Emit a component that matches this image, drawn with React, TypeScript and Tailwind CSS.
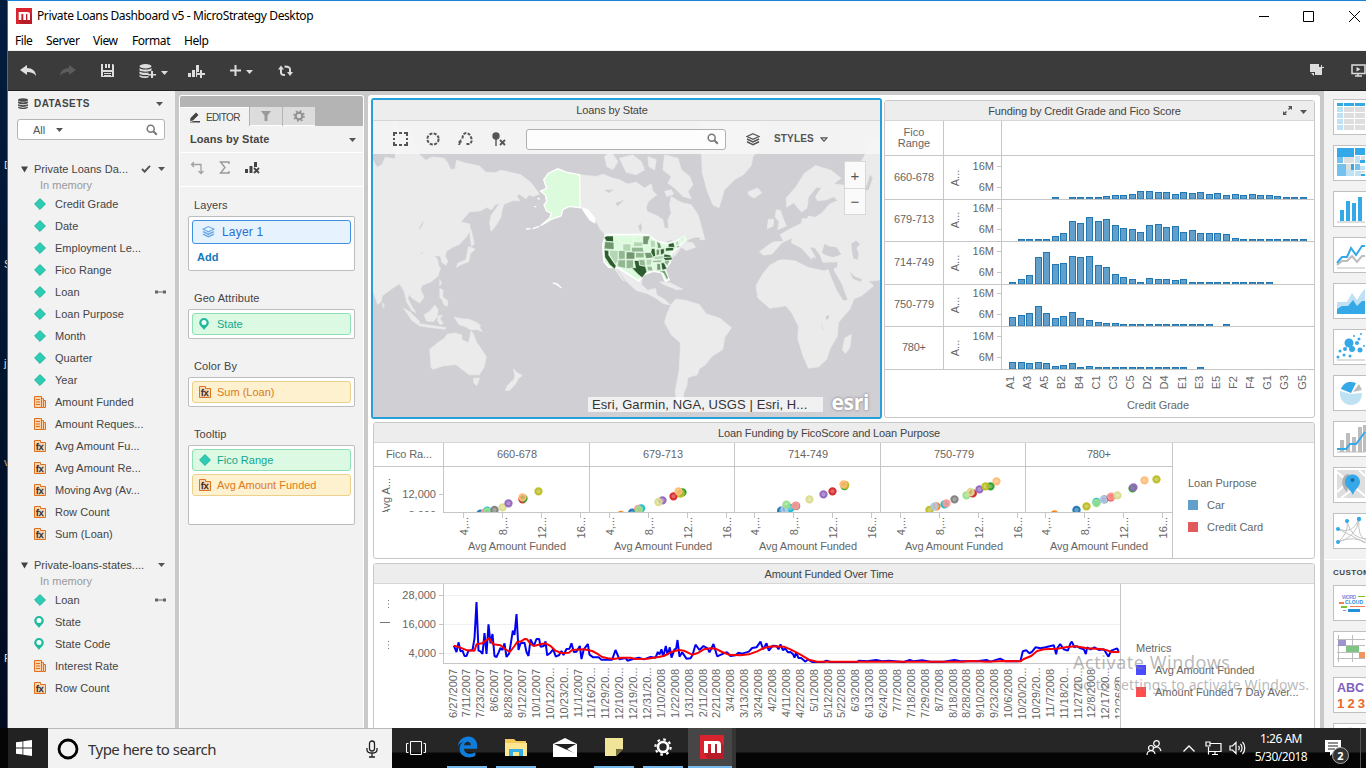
import React from "react";

const ARIAL = "'Liberation Sans', Arial, sans-serif";

function Caret({ className = "", color = "#555" }: { className?: string; color?: string }) {
  return (
    <svg className={"shrink-0 " + className} width="7" height="4" viewBox="0 0 7 4">
      <path d="M0 0h7L3.500 4z" fill={color} />
    </svg>
  );
}

function DbIcon() {
  return (
    <svg width="10" height="11" viewBox="0 0 10 11" fill="#4a4a4a" className="shrink-0">
      <ellipse cx="5" cy="2" rx="5" ry="1.800" />
      <path d="M0 3.300c1.500 1.500 8.500 1.500 10 0v1.700c-1.500 1.700-8.500 1.700-10 0zM0 6c1.500 1.500 8.500 1.500 10 0v1.600c-1.500 1.700-8.500 1.700-10 0zM0 8.600c1.500 1.500 8.500 1.500 10 0v.9c-1.500 2-8.500 2-10 0z" />
    </svg>
  );
}

function Mag({ color = "#777" }: { color?: string }) {
  return (
    <svg width="12" height="12" viewBox="0 0 12 12" fill="none" stroke={color} className="shrink-0">
      <circle cx="4.700" cy="4.700" r="3.500" strokeWidth="1.500" />
      <path d="M7.500 7.500l3.300 3.300" strokeWidth="2" />
    </svg>
  );
}

function FieldIcon({ kind }: { kind: string }) {
  if (kind === "attr")
    return (
      <svg width="12" height="12" viewBox="0 0 12 12" className="shrink-0">
        <path d="M6 .6L11.400 6 6 11.400.6 6z" fill="#2ccdb4" stroke="#1fb39c" />
      </svg>
    );
  if (kind === "geo")
    return (
      <svg width="12" height="12" viewBox="0 0 12 12" className="shrink-0">
        <path d="M5 0a4.800 4.800 0 0 1 4.800 4.800C9.800 7.800 6.500 9.500 5 12 3.500 9.500.2 7.800.2 4.800A4.800 4.800 0 0 1 5 0z" fill="#1fb99f" />
        <circle cx="5" cy="4.600" r="2.500" fill="#f4fffc" />
      </svg>
    );
  if (kind === "metric")
    return (
      <svg width="12" height="13" viewBox="0 0 12 13" className="shrink-0" fill="#fbd3ae" stroke="#e0701d">
        <path d="M.5.500h7v11h-7zM7.500 2.500h2v9h-2zM9.500 4.500h2v7h-2z" />
        <path d="M2 3.500h4M2 6h4M2 8.500h4" />
      </svg>
    );
  return (
    <svg width="12" height="13" viewBox="0 0 12 13" className="shrink-0">
      <path d="M.5.500h6v2h5v9h-11z" fill="#fbd9b5" stroke="#e0701d" />
      <text x="2" y="9.500" fontSize="9" fontFamily={ARIAL} fill="#222" stroke="#222" strokeWidth=".3" textLength="7.500" lengthAdjust="spacingAndGlyphs">fx</text>
    </svg>
  );
}

const fieldsA: [string, string][] = [
  ["attr", "Credit Grade"], ["attr", "Date"], ["attr", "Employment Le..."], ["attr", "Fico Range"], ["attr", "Loan"],
  ["attr", "Loan Purpose"], ["attr", "Month"], ["attr", "Quarter"], ["attr", "Year"], ["metric", "Amount Funded"],
  ["metric", "Amount Reques..."], ["fx", "Avg Amount Fu..."], ["fx", "Avg Amount Re..."], ["fx", "Moving Avg (Av..."],
  ["fx", "Row Count"], ["fx", "Sum (Loan)"],
];
const fieldsB: [string, string][] = [
  ["attr", "Loan"], ["geo", "State"], ["geo", "State Code"], ["metric", "Interest Rate"], ["fx", "Row Count"],
];

function Fields({ rows }: { rows: [string, string][] }) {
  return (
    <ul>
      {rows.map(([k, t]) => (
        <li key={t} className="flex h-[22px] items-center pl-[26px] pr-[9px]">
          <FieldIcon kind={k} />
          <span className="ml-[9px] flex-1 whitespace-nowrap tracking-[0.030px] text-[#444]">{t}</span>
          {t === "Loan" && (
            <svg width="11" height="4" viewBox="0 0 11 4" fill="#666"><path d="M0 .5h3v3H0zM8 .5h3v3H8zM3 1.500h5v1H3z" /></svg>
          )}
        </li>
      ))}
    </ul>
  );
}

function DatasetHead({ name, check }: { name: string; check?: boolean }) {
  return (
    <div>
      <div className="flex h-[18px] items-center pl-[13px] pr-[10px]">
        <svg width="7" height="7" viewBox="0 0 7 7"><path d="M0 .5h7L3.500 6.500z" fill="#444" /></svg>
        <span className="ml-[6px] flex-1 whitespace-nowrap tracking-[0.030px] text-[#444]">{name}</span>
        {check && (
          <svg width="10" height="8" viewBox="0 0 11 9" className="mr-[7px]" fill="none" stroke="#555" strokeWidth="2.200"><path d="M1 4.500l3 3L10 1" /></svg>
        )}
        <Caret />
      </div>
      <div className="h-[15px] pl-[32px] leading-[15px] text-[#999]">In memory</div>
    </div>
  );
}

function Datasets() {
  return (
    <aside className="flex h-full w-[167px] shrink-0 flex-col bg-[#f2f2f2]">
      <div className="flex h-[25px] items-center pl-[10px] pr-[12px]">
        <DbIcon />
        <span className="ml-[6px] flex-1 text-[10px] font-bold tracking-[0.420px] text-[#444]">DATASETS</span>
        <Caret />
      </div>
      <div className="ml-[9px] mt-[3px] flex h-[21px] w-[148px] items-center rounded-[3px] border border-[#b4b4b4] bg-white pl-[15px] pr-[6px]">
        <span className="text-[#555]">All</span>
        <Caret className="ml-[11px]" />
        <span className="flex-1" />
        <Mag />
      </div>
      <div className="mt-[20px]"><DatasetHead name="Private Loans Da..." check /></div>
      <div className="mt-0"><Fields rows={fieldsA} /></div>
      <div className="mt-[11px]"><DatasetHead name="Private-loans-states...." /></div>
      <div><Fields rows={fieldsB} /></div>
    </aside>
  );
}

function Pill({ kind, text }: { kind: string; text: string }) {
  const green = kind === "attr" || kind === "geo";
  return (
    <div className={"flex h-[22px] items-center rounded-[3px] border pl-[6px] " + (green ? "border-[#8fe0b4] bg-[#dcf9e4] text-[#10a88c]" : "border-[#ecd18c] bg-[#fdf1cf] text-[#dd7a1c]")}>
      <FieldIcon kind={kind} />
      <span className="ml-[6px]">{text}</span>
    </div>
  );
}

function DropZone({ label, h, mt, children }: { label: string; h: number; mt: number; children: React.ReactNode }) {
  return (
    <section style={{ marginTop: mt }}>
      <div className="h-[19px] pl-[6px] leading-[16px] tracking-[0.100px] text-[#444]">{label}</div>
      <div className="flex w-[167px] flex-col gap-[3px] rounded-[2px] border border-[#bdbdbd] bg-white p-[3px]" style={{ height: h }}>{children}</div>
    </section>
  );
}

function LayersIcon({ color, size = 14 }: { color: string; size?: number }) {
  return (
    <svg width={size} height={size - 1} viewBox="0 0 14 13" fill="none" stroke={color} className="shrink-0">
      <path d="M7 .7L13 3.500 7 6.300 1 3.500z" strokeWidth="1.100" />
      <path d="M1 6l6 2.900L13 6M1 8.700l6 2.900 6-2.900" strokeWidth="1.500" />
    </svg>
  );
}

function Editor() {
  return (
    <aside className="mt-[4px] flex h-full w-[185px] shrink-0 flex-col rounded-t-[3px] border border-b-0 border-white bg-[#f2f2f2]">
      <div className="flex h-[30px] items-end rounded-t-[2px] bg-[#b4b4b4]">
        <div className="flex h-[19px] w-[69px] items-center border-t border-white bg-[#f2f2f2] pl-[9px] text-[10px] text-[#444]">
          <svg width="11" height="11" viewBox="0 0 11 11" fill="#444"><path d="M1 9l.5-3L7 .5 9.500 3 4 8.500zM5 9h6v1.500H1V10z" /></svg>
          <span className="ml-[6px] pt-[2px] tracking-[-0.650px]">EDITOR</span>
        </div>
        <div className="ml-[1px] flex h-[19px] w-[32px] items-center justify-center border-b border-white bg-[#dcdcdc]">
          <svg width="10" height="10" viewBox="0 0 10 10" fill="#999"><path d="M0 0h10L6.500 4.500V10h-3V4.500z" /></svg>
        </div>
        <div className="ml-[1px] flex h-[19px] w-[32px] items-center justify-center border-b border-white bg-[#dcdcdc]">
          <svg width="12" height="12" viewBox="0 0 12 12" fill="none" stroke="#909090"><circle cx="6" cy="6" r="3.300" strokeWidth="2" /><circle cx="6" cy="6" r="5" strokeWidth="1.600" strokeDasharray="1.900 2.030" /></svg>
        </div>
      </div>
      <div className="flex h-[27px] items-center border-b border-white pb-px pl-[10px] pr-[7px]">
        <span className="flex-1 font-bold tracking-[0.080px] text-[#444]">Loans by State</span>
        <Caret className="mt-[3px]" />
      </div>
      <div className="flex h-[34px] items-center border-b border-white pb-[4px] pl-[10px]">
        <svg width="14" height="14" viewBox="0 0 14 14" fill="none" stroke="#a0a0a0" strokeWidth="1.300"><path d="M4 1L1.500 3.500 4 6M2 3.500h9v9M8.500 10l2.500 2.500 2.500-2.500" /></svg>
        <svg className="ml-[15px]" width="11" height="13" viewBox="0 0 11 13" fill="none" stroke="#999" strokeWidth="1.400"><path d="M10 3V1H1.500l4.500 5.500L1.500 12H10v-2" /></svg>
        <svg className="ml-[15px]" width="15" height="13" viewBox="0 0 15 13"><path d="M0 8h3v4H0zM4.500 5h3v7h-3zM9 1h3v5H9z" fill="#444" /><path d="M9 7l5 5M14 7l-5 5" stroke="#444" strokeWidth="1.800" /></svg>
      </div>
      <div className="pl-[8px]">
        <DropZone label="Layers" h={55} mt={10}>
          <div className="flex h-[24px] shrink-0 items-center rounded-[3px] border border-[#3f8fe4] bg-[#e6f2fe] pl-[9px]">
            <LayersIcon color="#6aa6e8" size={13} />
            <span className="ml-[7px] text-[12px] tracking-[0.200px] text-[#2a6fd2]">Layer 1</span>
          </div>
          <span className="pl-[5px] pt-[3px] font-bold text-[#1478b8]">Add</span>
        </DropZone>
        <DropZone label="Geo Attribute" h={30} mt={19}><Pill kind="geo" text="State" /></DropZone>
        <DropZone label="Color By" h={30} mt={19}><Pill kind="fx" text="Sum (Loan)" /></DropZone>
        <DropZone label="Tooltip" h={80} mt={19}>
          <Pill kind="attr" text="Fico Range" />
          <Pill kind="fx" text="Avg Amount Funded" />
        </DropZone>
      </div>
    </aside>
  );
}

const land = [
  "M12 81H75L95 110 120 95 150 178 170 196 190 186 225 190 236 205 245 225 258 222 262 196 290 205 330 213 350 232 378 234 395 226 425 233 455 240 470 252 484 262 497 280 510 298 492 305 480 300 470 312 450 298 442 305 452 318 430 318 405 328 398 345 395 368 380 392 366 410 361 385 366 362 378 345 392 325 378 330 366 345 352 338 335 348 300 352 275 382 302 388 300 410 293 425 270 450 250 458 232 470 228 485 236 500 230 512 218 503 214 485 195 482 205 495 208 512 214 522 206 545 185 563 160 572 154 585 165 608 152 626 130 612 120 600 116 612 128 636 140 655 128 648 113 622 105 590 92 568 72 580 40 604 36 622 26 630 12 590Z",
  "M300 392l7 18 8 38-8 8-4-30zM298 456l20 8-14 12-6 26-22 8-14 8 4-12 24-10zM212 556l5 10-5 8zM212 582l10 6-2 18 16 14-2 16-10-6-4-12-8-10zM104 642l20 12 28 28-4 10-20-14zM150 688l40 6 40 6-2 5-50-6-28-5zM165 662l18-12 14-18 10 14-4 22-10 14-20-2zM206 665l14-2-8 10 10 14-8 4-8-10zM255 668l14 4 14 2 14 0 24 10 14 10-4 4 8 14-14-6-22 0-12-8-22-8zM40 625l6 8-3 8z",
  "M182 765l4 55 6 5 30-10 38-4 22 17 18 14 30 0 14-22 7-32-15-24-14-20-8-22-8-12-8 36-20-10 0-14-22-6-22 4-8 12-18 12zM313 852l18 0-8 22-8-6zM433 824l10 12 16 8-12 10-8 14-8-6 6-16zM428 860l12 8-18 20-14 2 6-14z",
  "M632 240L680 245 700 238 725 248 750 255 775 268 800 262 825 280 845 268 850 290 862 300 838 318 830 335 832 350 860 362 880 375 884 400 897 402 895 375 905 355 900 330 905 305 925 318 940 325 965 330 985 360 995 395 1003 428 975 428 945 440 970 445 978 458 950 468 935 458 920 480 905 490 890 522 878 535 890 555 884 558 876 530 850 528 832 530 818 550 816 570 835 588 858 582 862 602 885 615 903 632 882 628 860 612 835 598 800 588 770 560 735 510 742 525 765 560 760 558 735 522 722 505 706 480 704 445 706 420 690 400 678 375 655 345 632 338Z",
  "M905 630l14-16 30 4 40 12 20 28 42 14 34 28-20 30-6 36-32 20-20 26-18 12-6 18-28 8-4 26-10 26 6 40-24 0-6-50 12-66 4-80-28-24-20-38 8-28z",
  "M870 562l30 2 26 14 14 6-20 2-12-6-22-8zM750 190L790 180 815 200 825 225 800 240 770 232ZM885 180L925 190 935 225 960 245 970 270 955 290 965 312 940 305 915 280 895 265 905 245 880 225ZM845 120L890 100 930 130 900 170 860 165ZM835 185L860 195 855 225 838 215ZM885 290L905 285 912 298 892 305ZM705 185L725 170 745 200 730 225 712 215ZM760 120L800 110 830 140 800 165 770 150ZM990 436L1000 420 1006 434Z",
  "M994 81h180l-10 90-14 12-6 30-22 26-28 16-30 30-16 54-18-8-18-44-14-54-2-50-10-30zM1134 292l30-12 12 14-22 16-16-8z",
  "M1195 452l16-10 30-2-10-20 28-16 36-18 2-14 18-8 22 4 20-14 22-26 24-10-10-12-26 10-24 2-6-12 18-28-16 0-24 30-2 32-18 12-24-28-20 14-2-28 28-32 26-42 34-24 46 14 30 24-22 18 40 4 20-14 10-40 20-30 20-44 40-20 30-20V562l-38-6-38 4 16 14-36 30-40 16-18-50-22-38-8-30-40 2-14-18-14 12-34-34-20-20 2-14-30 14-30 34-26 4-12-10z",
  "M1220 345l12 2 10 30 8 16-26 12 4-24-12-14zM1196 374l16 0-2 20-18 8z",
  "M1200 512l34-18 54 0 8 14 36 12 40-4 10 30 18 42 20 32 32-6-12 30-34 40-4 42-22 38-10 32-24 22-30 4-16-36-16-52 2-38-20-40-18-22-48 8-36-32-5-36 20-36zM1424 732l20-12-4 40-14 18-8-12z",
];
const seas = [
  "M1270 448l24 12 28 32 12 16 4-20-18-30 14 2 16 22 10 26 20-2 22-4 0 16-40 10-46-10-40-20-36-4-26 4 20-24 16-14z",
  "M1356 474l8-26 16 8 20 2 14 22-24 8-22-6zM1444 448l14-10 12 10-10 12 6 18-2 18-14-4-4-24zM1322 300l14 10-6 30-20 32-12-2 14-30z",
  "M165 470l-8 8-4 0zM150 400l14-24-4 14-10 16zM1440 532l14 14 22 8-4 8-24-10zM1368 665l10-2-2 10-8 4zM1354 685l6 20-2 2zM1460 290l30-18 10-32 8 10-12 34-30 14zM12 81h60l6 110-30-5-10 24-14 6-12-22z",
  "M705 285l28 0-16 10zM738 325l26-10-20 20zM806 395l8-10 4 14-6 14zM890 440l20-4-12 10z",
];
const G = ["#dcfadc", "#b3d7b3", "#92b892", "#6f986f", "#2d5c2f"];
const states: [string, number][] = [
  ["M712 424l20 0 0 18-22-2-6-12z", 4], ["M706 441l28 2 0 22-30-2z", 3], ["M704 466l14 2 0 14 22 32-4 10-16-14-14-22z", 4],
  ["M720 467l26 0 0 34-8 8-18-28z", 1], ["M733 424l12 0 14 20 0 22-24 0z", 0], ["M741 424l50 0 0 22-32 2z", 0],
  ["M760 448l24 0 0 22-24 0z", 1], ["M747 468l20 0 0 26-20 0z", 2], ["M770 472l26 0 0 22-26 0z", 3],
  ["M746 496l22 0 0 26-24-6z", 2], ["M770 496l22 0 0 26-22 0z", 2], ["M792 424l26 0 0 16-26 0z", 0], ["M792 442l28 0 0 14-28 0z", 1],
  ["M786 458l34 0 4 14-38 0z", 2], ["M798 474l26 0 0 16-26 0z", 2], ["M794 494l32 2 2 20-18-4-2-16z", 2],
  ["M794 498l14 0 2 14 18 4 4 16-14 18-12-10-12-12-8-8 12 0z", 4], ["M820 424l22 0-6 18 0 8-16 0z", 3], ["M822 452l20 0 4 10-4 8-18 0z", 0],
  ["M825 474l20 0 6 16-22 2z", 3], ["M830 494l18 0-4 18-14 0z", 1], ["M832 515l14 0 6 14-18 0z", 2], ["M842 436l14 2 2 18-14 4z", 1],
  ["M846 462l10 0 2 24-6 2-8-14z", 4], ["M862 440l10 6 4 14-12 2z", 3], ["M860 464l10 0 0 16-10 4z", 3], ["M872 464l12-2 0 14-10 6z", 4],
  ["M854 486l30-4-6 12-24 2z", 1], ["M850 498l30-2-8 8-24 0z", 2], ["M850 507l10 0 0 20-10 0z", 0], ["M862 507l10 0 2 20-12 0z", 3],
  ["M874 505l10 0 8 18-14 4z", 4], ["M886 498l16-2-8 18-10-10z", 2], ["M880 490l26-4 2 10-20 2z", 4], ["M884 478l20 4 0 6-22 0z", 4],
  ["M888 460l24-2 0 10-24 2z", 4], ["M896 448l16-4 4 14-20 0z", 4], ["M918 442l8-4 2 14-8 0z", 1], ["M920 454l12 0-8 6z", 3], ["M930 430l14-6 2 14-12 8z", 0],
  ["M868 530l18-2 10 22-4 6-10-20z", 3],
];

function MapSvg() {
  return (
    <svg className="block h-full w-full" viewBox="12 78 1518 891" preserveAspectRatio="none">
      <rect x="0" y="70" width="1540" height="910" fill="#d0cfd4" />
      {land.map((d, i) => <path key={i} d={d} fill="#ebebeb" stroke="#ebebeb" strokeWidth="2" strokeLinejoin="round" />)}
      {seas.map((d, i) => <path key={i} d={d} fill="#d0cfd4" />)}
      <path d="M523 255l14-20 28-13 26 10 40 8 1 99-32-4-20 10-4 18-28 10-34 20 28-24 4-14-14-6-8-18 8-12-4-18-14-12 18-8z" fill="#dcfadc" stroke="#fff" strokeWidth="4" />
      <path d="M638 340l18 6 20 26 0 12-14-8-14-20zM470 403l14-1M490 402l20-7M495 336h6M505 310l6 4M550 565l14 4 12 12" fill="#fff" stroke="#fff" strokeWidth="4" />
      <path d="M708 420l124 0 30 20 30 8 24-6 28-16 4 10-22 22-22 20-2 26-16 20 12 32-10 4-12-26-26-4-32 12-10 18-24-16-38-24-28-2-14-16-4-50z" fill="#dcfadc" stroke="#fff" strokeWidth="5" />
      {states.map(([d, c], i) => <path key={i} d={d} fill={G[c]} stroke="#eefcee" strokeWidth="2" />)}
    </svg>
  );
}

function PanelHead({ title, tools, dx = 0, tall }: { title: string; tools?: boolean; dx?: number; tall?: boolean }) {
  return (
    <div className={"relative flex shrink-0 items-center justify-center border-b border-[#d6d6d6] bg-[#ededed] tracking-[-0.130px] text-[#444] " + (tall ? "h-[21px]" : "h-[20px]")}>
      <span style={{ marginRight: dx }}>{title}</span>
      {tools && (
        <div className="absolute right-[7px] top-[5px] flex items-center gap-[8px]">
          <svg width="9" height="9" viewBox="0 0 9 9" fill="#555"><path d="M5 0h4v4L7.500 2.500 6 4 5 3l1.500-1.500zM0 5l1.500 1.500L3 5l1 1-1.500 1.500L4 9H0z" /></svg>
          <Caret className="mt-[3px]" />
        </div>
      )}
    </div>
  );
}

function MapPanel() {
  return (
    <div className="flex h-[321px] w-[511px] shrink-0 flex-col rounded-[3px] border-2 border-[#26a0da] bg-white">
      <PanelHead title="Loans by State" dx={29} tall />
      <div className="relative min-h-0 flex-1 overflow-hidden">
        <MapSvg />
        <div className="absolute inset-x-0 top-0 flex h-[33px] items-center bg-[#f6f6f6]/90 pl-[20px] pt-[3px] text-[#555]">
          <svg width="15" height="14" viewBox="0 0 15 14" fill="none" stroke="#555" strokeWidth="2"><path d="M1 4V1h3M6 1h3M11 1h3v3M14 6v2M14 10v3h-3M9 13H6M4 13H1v-3M1 8V6" /></svg>
          <svg className="ml-[18px]" width="14" height="14" viewBox="0 0 14 14" fill="none" stroke="#555" strokeWidth="2"><circle cx="7" cy="7" r="5.600" strokeDasharray="3 1.400" /></svg>
          <svg className="ml-[18px]" width="15" height="14" viewBox="0 0 15 14" fill="none" stroke="#555" strokeWidth="2"><path d="M4.500 6.500c0-7 6-6.500 8-2.500 1.500 3 2 6-1 8H7.500" strokeDasharray="3 1.300" /><path d="M0 10l3-3 1 4-1-1-1 3H0l1-2z" fill="#555" stroke="none" /></svg>
          <svg className="ml-[19px]" width="14" height="15" viewBox="0 0 14 15"><circle cx="4" cy="4" r="3.700" fill="#555" /><path d="M3.300 7h1.400v7H3.300z" fill="#555" /><path d="M8 8l5 5M13 8l-5 5" stroke="#555" strokeWidth="1.800" /></svg>
          <div className="ml-[20px] flex h-[21px] w-[200px] items-center justify-end rounded-[3px] border border-[#b0b0b0] bg-white/80 pr-[6px]"><Mag /></div>
          <span className="ml-[20px] flex"><LayersIcon color="#555" /></span>
          <span className="ml-[14px] text-[10px] font-bold tracking-[0.150px]">STYLES</span>
          <svg className="ml-[6px]" width="8" height="5" viewBox="0 0 8 5" fill="none" stroke="#555" strokeWidth="1.200"><path d="M1 .8h6L4 4.200z" /></svg>
        </div>
        <div className="absolute right-[14px] top-[40px] flex w-[22px] flex-col border border-[#d8d8d8] bg-[#fafafa] text-center text-[15px] text-[#555]">
          <span className="h-[27px] border-b border-[#d8d8d8] leading-[27px]">+</span>
          <span className="h-[25px] leading-[25px]">−</span>
        </div>
        <div className="absolute bottom-[5px] right-[57px] h-[15px] w-[235px] whitespace-nowrap bg-white/70 pl-[4px] text-[13px] leading-[15px] tracking-[0.090px] text-[#333]">Esri, Garmin, NGA, USGS | Esri, H...</div>
        <div className="absolute bottom-[2px] right-[11px] font-['Open_Sans'] text-[21px] font-bold leading-[26px] tracking-[-0.300px] text-white [text-shadow:0_0_3px_#777]">esri</div>
      </div>
    </div>
  );
}

const bars: number[][] = [
  [0,0,0,0,0,2,0,2,2,2,2,3,4,4,5,8,8,7,7,5,7,6,7,5,6,4,5,4,5,4,4,3,2,2,2],
  [0,2,2,2,2,5,8,20,18,24,20,22,16,13,12,9,16,17,14,15,9,11,8,8,8,7,3,2,2,2,2,2,2,2,2],
  [2,5,9,27,32,20,21,28,27,28,19,17,10,7,5,2,6,5,5,4,5,2,2,2,2,2,2,2,2,2,2,0,0,0,0],
  [9,11,13,20,13,8,10,14,8,6,4,3,3,2,2,2,2,2,2,2,2,2,2,2,0,2,0,0,0,0,0,0,0,0,0],
  [7,7,6,7,6,3,4,6,2,3,2,2,2,2,2,2,2,2,2,2,2,0,2,0,0,0,0,0,0,0,0,0,0,0,0],
];
const base = [199, 241, 284, 326, 369];
const fico = ["660-678", "679-713", "714-749", "750-779", "780+"];
const grades = ["A1","A3","A5","B2","B4","C1","C3","C5","D2","D4","E1","E3","E5","F2","F4","G1","G3","G5"];

function VText({ x, y, anchor = "middle", children, len }: { x: number; y: number; anchor?: "middle" | "start" | "end"; children: string; len?: number }) {
  return <text transform={`translate(${x} ${y}) rotate(-90)`} textAnchor={anchor} textLength={len}>{children}</text>;
}

function BarPanel() {
  return (
    <div className="flex h-[318px] w-[431px] shrink-0 flex-col overflow-hidden rounded-[3px] border border-[#c8c8c8] bg-white">
      <PanelHead title="Funding by Credit Grade and Fico Score" tools dx={30} />
      <svg className="block" width="429" height="296" viewBox="885 121 429 296" fontFamily={ARIAL} fontSize="11" fill="#666">
        <g stroke="#c6c6c6" fill="none" shapeRendering="crispEdges">
          <path d="M885 155.500h429M885 199.500h429M885 241.500h429M885 284.500h429M885 326.500h429M885 369.500h429M943.500 121v249M1001.500 121v249" />
          {base.map((b) => <path key={b} d={`M997 ${b - 32.500}h4M997 ${b - 11.500}h4`} />)}
        </g>
        <text x="914" y="136" textAnchor="middle">Fico</text>
        <text x="914" y="147" textAnchor="middle">Range</text>
        {base.map((b, r) => (
          <g key={b}>
            <text x="914" y={b - 18} textAnchor="middle" textLength={r < 4 ? 40 : 24}>{fico[r]}</text>
            <text x="994" y={b - 29} textAnchor="end">16M</text>
            <text x="994" y={b - 8} textAnchor="end">6M</text>
            <VText x={959} y={b - 21}>A...</VText>
            {bars[r].map((h, i) => h > 0 && (
              <rect key={i} x={Math.round(1009 + i * 8.560) + 0.500} y={b - h + 0.500} width="6" height={h - 0.500} fill="#629fca" stroke="#1f77b4" />
            ))}
            <path d={`M1002 ${b + 0.500}h312`} stroke="#c6c6c6" shapeRendering="crispEdges" />
          </g>
        ))}
        {grades.map((g, i) => <VText key={g} x={1014 + i * 17.150} y={382.500}>{g}</VText>)}
        <text x="1158" y="409" textAnchor="middle" textLength="62">Credit Grade</text>
      </svg>
    </div>
  );
}

const C: Record<string, string> = { b: "#1f77b4", p: "#ff9896", g: "#98df8a", k: "#7f7f7f", y: "#dbdb8d", v: "#9467bd", r: "#d62728", e: "#2ca02c", a: "#ffbb78", o: "#bcbd22", c: "#17becf", n: "#ff7f0e", l: "#aec7e8" };
const dots: [number, number, string][] = [
  [330,280,"b"],[343,277,"p"],[350,271,"c"],[350,274,"g"],[372,269,"k"],[396,261,"y"],[414,249,"v"],[456,237,"r"],[459,234,"e"],[456,231,"a"],[504,213,"o"],
  [751,284,"n"],[785,277,"b"],[812,264,"c"],[803,266,"p"],[805,269,"g"],[876,240,"v"],[864,245,"y"],[909,228,"r"],[936,216,"e"],[930,220,"o"],[924,213,"a"],
  [1232,271,"b"],[1260,263,"c"],[1242,267,"l"],[1248,253,"g"],[1277,257,"k"],[1275,256,"p"],[1317,237,"y"],[1359,222,"v"],[1386,213,"r"],[1422,197,"e"],[1424,194,"o"],[1419,192,"a"],
  [1677,269,"o"],[1698,258,"n"],[1692,258,"l"],[1722,252,"c"],[1728,249,"p"],[1752,237,"k"],[1788,225,"g"],[1807,219,"r"],[1800,215,"y"],[1827,207,"v"],[1860,198,"e"],[1845,198,"o"],[1878,183,"a"],
  [2052,282,"n"],[2118,269,"b"],[2148,258,"o"],[2178,245,"c"],[2178,248,"g"],[2202,237,"k"],[2200,237,"l"],[2221,231,"r"],[2222,229,"p"],[2241,225,"y"],[2286,204,"e"],[2289,201,"v"],[2322,180,"a"],[2358,177,"o"],
];

function ScatterPanel() {
  const cols = [443, 589, 734, 880, 1025];
  return (
    <div className="flex h-[137px] w-[942px] flex-col overflow-hidden rounded-[3px] border border-[#c8c8c8] bg-white">
      <PanelHead title="Loan Funding by FicoScore and Loan Purpose" dx={30} />
      <div className="flex flex-1">
        <svg className="block" width="799" height="115" viewBox="374 443 799 115" fontFamily={ARIAL} fontSize="11" fill="#666">
          <g stroke="#c6c6c6" shapeRendering="crispEdges">
            <path d="M374 466.500h798M443 512.500h729M443.500 443v70M589.500 443v70M734.500 443v70M880.500 443v70M1025.500 443v70M1172.500 443v115M439 494.500h4" />
          </g>
          <text x="409" y="458" textAnchor="middle" textLength="46">Fico Ra...</text>
          <text x="436" y="498" textAnchor="end">12,000</text>
          <clipPath id="plot"><path d="M374 467h798v45H374z" /></clipPath>
          <g clipPath="url(#plot)">
            <text x="436" y="519" textAnchor="end">8,000</text>
            <VText x={390} y={478} anchor="end">Avg A...</VText>
            <g transform="translate(370 420) scale(.33333)">
              {dots.map(([x, y, c], i) => <circle key={i} cx={x + 1.500} cy={y + 1} r="9.500" fill={C[c]} fillOpacity=".7" stroke={C[c]} strokeWidth="6" strokeOpacity=".95" />)}
            </g>
          </g>
          {cols.map((x, i) => (
            <g key={x}>
              <text x={x + 74} y="458" textAnchor="middle" textLength={i < 4 ? 40 : 24}>{fico[i]}</text>
              {["4,...", "8,...", "12...", "16..."].map((t, j) => (
                <g key={t}>
                  <path d={`M${x + 20.500 + j * 39} 513v5`} stroke="#c6c6c6" shapeRendering="crispEdges" />
                  <VText x={x + 25 + j * 39} y={517} anchor="end">{t}</VText>
                </g>
              ))}
              <text x={x + 74} y="550" textAnchor="middle" textLength="98">Avg Amount Funded</text>
            </g>
          ))}
        </svg>
        <div className="flex flex-col pl-[15px] pt-[32px] text-[#666]">
          <span className="leading-[16px]">Loan Purpose</span>
          <span className="mt-[6px] flex items-center leading-[16px]"><i className="mr-[9px] h-[10px] w-[10px] bg-[#629fca]" />Car</span>
          <span className="mt-[6px] flex items-center leading-[16px]"><i className="mr-[9px] h-[10px] w-[10px] bg-[#e25b5c]" />Credit Card</span>
        </div>
      </div>
    </div>
  );
}

const blue = "250,257 258,276 264,247 270,274 276,272 282,288 288,288 294,272 306,270 312,235 318,126 324,272 330,274 336,282 342,219 348,282 354,193 360,250 366,222 372,288 378,291 384,278 390,264 396,270 402,250 408,291 416,280 421,250 427,212 432,225 438,162 444,270 450,250 462,248 468,276 474,288 480,238 490,258 498,237 506,237 510,260 520,258 525,244 530,286 540,278 548,268 556,290 566,285 573,273 579,285 588,267 597,266 603,250 610,276 618,275 628,258 633,297 640,268 652,252 657,284 668,292 685,292 692,299 725,299 735,270 747,298 765,294 771,302 785,298 805,293 820,298 840,291 855,293 862,276 867,283 873,268 878,290 886,258 891,285 898,262 903,293 912,268 917,266 921,240 927,290 935,277 948,296 960,295 966,285 975,254 987,270 999,258 1011,265 1017,277 1029,252 1040,289 1060,280 1070,277 1080,288 1095,286 1104,278 1115,281 1135,275 1145,264 1158,262 1170,245 1178,268 1188,250 1195,272 1207,257 1218,258 1224,268 1230,253 1237,270 1245,266 1252,277 1260,276 1268,283 1272,293 1277,278 1284,294 1292,294 1305,305 1312,298 1325,306 1360,306 1368,302 1380,306 1460,306 1465,302 1490,304 1517,300 1535,304 1555,302 1600,306 1618,300 1630,304 1655,301 1680,305 1720,305 1752,300 1770,304 1820,304 1848,300 1860,305 1889,296 1905,304 1940,304 1950,303 1957,274 1967,271 1977,280 1985,275 1995,262 2010,265 2025,262 2050,256 2057,283 2060,265 2069,252 2080,268 2092,272 2100,250 2104,245 2112,262 2118,258 2130,265 2140,268 2146,282 2150,262 2160,268 2172,262 2185,270 2200,268 2214,290 2222,272 2240,265 2246,278";
const red = "250,257 262,260 290,271 312,272 318,253 335,250 346,242 356,235 368,253 390,256 405,268 418,276 432,258 440,246 452,244 462,237 470,238 480,252 490,258 510,253 525,250 540,258 555,272 572,279 595,278 605,270 640,268 665,273 680,281 695,291 712,295 730,297 752,293 780,293 795,297 830,296 860,292 880,288 905,275 925,270 940,272 965,284 980,280 1000,268 1020,265 1035,266 1055,276 1075,284 1110,286 1135,283 1160,274 1180,264 1205,259 1240,260 1260,268 1290,284 1315,299 1340,305 1775,305 1800,303 1850,305 1900,303 1950,304 1960,297 1982,288 2000,273 2020,268 2060,266 2090,261 2115,259 2150,265 2190,267 2210,271 2222,276 2246,276";
const dates = ["6/27/2007","7/11/2007","7/23/2007","8/6/2007","8/28/2007","9/12/2007","10/1/2007","10/12/20...","10/23/20...","11/1/2007","11/16/20...","11/29/20...","12/10/20...","12/19/20...","12/31/20...","1/10/2008","1/22/2008","1/31/2008","2/11/2008","2/21/2008","3/4/2008","3/13/2008","3/24/2008","4/2/2008","4/11/2008","4/22/2008","5/1/2008","5/12/2008","5/22/2008","6/3/2008","6/13/2008","6/24/2008","7/7/2008","7/18/2008","7/29/2008","8/7/2008","8/18/2008","8/28/2008","9/10/2008","9/23/2008","10/6/2008","10/20/20...","10/29/20...","11/7/2008","11/18/20...","11/27/20...","12/8/2008","12/17/20...","12/26/20..."];

function LinePanel() {
  return (
    <div className="flex h-[180px] w-[942px] flex-col overflow-hidden rounded-[3px] border border-[#c8c8c8] bg-white">
      <PanelHead title="Amount Funded Over Time" dx={30} />
      <div className="flex flex-1">
        <svg className="block" width="747" height="159" viewBox="374 584 747 159" fontFamily={ARIAL} fontSize="11" fill="#666">
          <clipPath id="line"><path d="M374 584h745.500v159H374z" /></clipPath>
          <g shapeRendering="crispEdges" fill="none">
            <path d="M444 595.500h676M444 624.500h676M444 653.500h676" stroke="#f0f0f0" />
            <path d="M443.500 584v80M443 663.500h677M439 595.500h4M439 624.500h4M439 653.500h4M1120.500 584v159" stroke="#c6c6c6" />
          </g>
          <text x="436" y="599" textAnchor="end">28,000</text>
          <text x="436" y="628" textAnchor="end">16,000</text>
          <text x="436" y="657" textAnchor="end">4,000</text>
          <path d="M380 622.500h10" stroke="#777" />
          <path d="M388.500 600v1M388.500 603.500v1M388.500 607v1M388.500 641v1M388.500 644.500v1M388.500 648v1" stroke="#777" />
          <g clipPath="url(#line)">
            <g transform="translate(370.5 560) scale(.33333)" fill="none" strokeWidth="6" strokeLinejoin="bevel">
              <polyline points={blue} stroke="#0000f5" />
              <polyline points={red} stroke="#fb0000" />
            </g>
            {dates.map((d, i) => <VText key={d} x={456.500 + i * 13.890} y={d.endsWith("...") ? 667.500 : 669} anchor="end">{d}</VText>)}
          </g>
        </svg>
        <div className="flex flex-col pl-[15px] pt-[56px] text-[#666]">
          <span className="leading-[16px]">Metrics</span>
          <span className="mt-[6px] flex items-center leading-[16px]"><i className="mr-[9px] h-[10px] w-[10px] bg-[#4c4cff]" />Avg Amount Funded</span>
          <span className="mt-[6px] flex items-center whitespace-nowrap leading-[16px]"><i className="mr-[9px] h-[10px] w-[10px] bg-[#ff4c4c]" />Amount Funded 7 Day Aver...</span>
        </div>
      </div>
    </div>
  );
}

const B = "#35a8e8";
const L = "#bfe1f4";
const K = "#bdbdbd";
const thumbs: React.ReactNode[] = [
  <g><path d="M4 4h6v3H4zM11 4h10v3H11zM22 4h10v3H22z" fill={B} /><path d="M4 8h6v5H4zM4 14h6v5H4zM4 20h6v5H4zM4 26h6v5H4z" fill={L} /><path d="M11 8h10v5H11zM11 14h10v5H11zM11 20h10v5H11zM11 26h10v5H11zM22 8h10v5H22zM22 14h10v5H22zM22 20h10v5H22zM22 26h10v5H22z" fill="#dedede" /></g>,
  <g><path d="M4 3h17v9H4zM22 3h10v7H22zM18 19h3v6h-3zM28 29h4v2h-4zM27 15h5v3h-5z" fill={B} /><path d="M4 12h6v6H4zM4 19h9v12H4zM22 19h5v6h-5z" fill="#74c1ee" /><path d="M22 11h5v7h-5zM13 25h8v6h-8zM22 26h6v5h-6zM27 21h5v4h-5z" fill={L} /><path d="M11 12h10v6H11zM13 19h5v6h-5zM28 11h4v4h-4zM28 26h4v2h-4z" fill="#dedede" /></g>,
  <g><path d="M7 19h4v11H7zM13 10h4v20h-4zM19 12h4v18h-4zM25 6h4v24h-4z" fill={B} /><path d="M4 31h28" stroke={K} /></g>,
  <g fill="none" strokeWidth="2"><path d="M4 28l5-4h5l5-5 5 6 5-6h3" stroke={K} /><path d="M4 26l5-6h5l4-9 5 7 6-9h3" stroke={B} /><path d="M4 31h28" stroke={K} strokeWidth="1" /></g>,
  <g><path d="M4 31V19h10l5-9 5 7 5-8 3-3v25z" fill={L} /><path d="M4 31v-5l5-3h6l5-6 4 6 5-5h3v13z" fill={B} /></g>,
  <g fill={B}><circle cx="16" cy="14" r="4.500" /><circle cx="19" cy="20" r="3" /><circle cx="12" cy="20" r="2" /><circle cx="27" cy="21" r="2.500" /><circle cx="24" cy="14" r="2" /><circle cx="26" cy="10" r="1.500" /><circle cx="21" cy="7" r="1" /><circle cx="28" cy="5" r="1" /><circle cx="7" cy="22" r="1.500" /><circle cx="11" cy="26" r="1.500" /><circle cx="17" cy="27" r="1.500" /><circle cx="5" cy="28" r="1.500" /><circle cx="31" cy="17" r="1" /><path d="M4 31h28" stroke={K} /></g>,
  <g><path d="M18 19L7 16c-1 8 4 14 11 14 7 0 11-5 11-12z" fill={L} /><path d="M18 18L8 14c3-8 10-8 15-6z" fill={B} /><path d="M20 17l6-8 3 6z" fill={K} /></g>,
  <g><path d="M7 19h4v12H7zM13 12h4v19h-4zM19 16h4v15h-4zM25 6h4v25h-4zM30 4h4v27h-4z" fill={K} /><path d="M4 28h9l4-5h6l9-12" fill="none" stroke={B} strokeWidth="2" /><path d="M4 31h28" stroke={K} /></g>,
  <g><path d="M4 3h28v28H4z" fill="#dedede" /><path d="M4 5l28 24M4 25L15 15M8 31l12-9M26 3l6 6" stroke="#fff" strokeWidth="2" /><path d="M14 25C6 18 9 7 16 7z" fill="#b0b0b0" /><path d="M20 28c-2-5-8-8-8-13 0-10 15-10 15 0 0 5-6 8-7 13z" fill={B} /><circle cx="19.500" cy="13" r="2" fill="#156fa5" /></g>,
  <g><path d="M14 8Q16 20 5 29Q24 24 26 6Q24 24 34 28M5 16Q18 22 32 30M14 8Q18 26 34 26M26 6Q20 22 5 16M5 29Q20 22 34 30" fill="none" stroke="#c4c4c4" /><circle cx="14" cy="8" r="2" fill={B} /><circle cx="26" cy="6" r="2.200" fill={B} /><circle cx="5" cy="16" r="2" fill={B} /><circle cx="5" cy="29" r="2" fill={B} /></g>,
  <g fontFamily={ARIAL} fontWeight="bold" fontSize="5"><text x="9" y="14" fill="#8d8de0" textLength="14">WORD</text><text x="12" y="19" fill="#2490d8" textLength="18">CLOUD</text><path d="M25 11h7v1h-7zM8 21h6v2H8z" fill="#7cc02c" /><path d="M6 17h5v2H6zM17 21h15v1H17z" fill="#f5814f" /><path d="M15 24h12v3H15z" fill="#2490d8" /><path d="M10 25h3v1h-3z" fill="#8d8de0" /></g>,
  <g><path d="M4 8.500h28M4 14.500h28M4 21.500h28M4 27.500h28M5.500 4v27M19.500 4v27" stroke={K} /><path d="M5 9h8v6H5z" fill="#9e95cc" /><path d="M13 15h13v6H13z" fill="#7fc482" /><path d="M26 21h6v6h-6z" fill="#f0955f" /></g>,
  <g fontFamily={ARIAL} fontWeight="bold" fontSize="12.500"><text x="4" y="15" fill="#7f5fc0" textLength="27">ABC</text><text x="4" y="31" fill="#e8682a" textLength="28" fontSize="13">123</text></g>,
  <g fill="none"><circle cx="18" cy="18" r="11" stroke="#e9c9a8" strokeWidth="5" strokeDasharray="7 2" /></g>,
];

function Thumb({ children }: { children: React.ReactNode }) {
  return (
    <div className="h-[36px] w-[44px] shrink-0 border border-[#c0c0c0] bg-white">
      <svg width="34" height="34" viewBox="1 1 34 34">{children}</svg>
    </div>
  );
}

function Gallery() {
  return (
    <aside className="flex h-full w-[42px] shrink-0 flex-col overflow-hidden bg-[#f2f2f2] pt-[8px]">
      <div className="flex flex-col gap-[10px] pl-[9px]">{thumbs.slice(0, 10).map((t, i) => <Thumb key={i}>{t}</Thumb>)}</div>
      <div className="mt-[10px] h-[26px] shrink-0 border-t border-white pl-[9px] pt-[6px] text-[8px] font-bold leading-[13px] tracking-[0.450px] text-[#444]">CUSTOM</div>
      <div className="flex flex-col gap-[10px] pl-[9px]">{thumbs.slice(10).map((t, i) => <Thumb key={i}>{t}</Thumb>)}</div>
    </aside>
  );
}

function MLogo({ size }: { size: number }) {
  return (
    <svg width={size} height={size} viewBox="0 0 24 24" className="shrink-0">
      <path d="M0 0h24v24H0z" fill="#d9232e" /><path d="M4 18l16-11 4 4v13H8z" fill="#b81c26" />
      <path d="M4 6h13c3 0 4 1 4 4v8h-4V9h-2v9h-4V9H8v9H4z" fill="#fff" />
    </svg>
  );
}

function Toolbar() {
  return (
    <div className="flex h-[40px] shrink-0 items-center border-b border-[#222] bg-[#3b3b3b]">
      <svg className="ml-[12px]" width="17" height="11" viewBox="0 0 17 11"><path d="M0 5l7-5v3c5 0 9 3 9 8-2-3-5-4-9-4v3z" fill="#e0e0e0" /></svg>
      <svg className="ml-[22px]" width="17" height="11" viewBox="0 0 17 11"><path d="M17 5l-7-5v3C5 3 1 6 1 11c2-3 5-4 9-4v3z" fill="#5c5c5c" /></svg>
      <svg className="ml-[25px]" width="13" height="13" viewBox="0 0 13 13"><path d="M0 0h2v6h9V0h1l1 1v12H0zM4 0h2v4H4zM7 0h2v4H7z" fill="#ddd" /><path d="M2 8h9v4H2z" fill="#3b3b3b" /><path d="M3 9h7v1H3zM3 11h7v1H3z" fill="#ddd" /></svg>
      <svg className="ml-[25px]" width="17" height="14" viewBox="0 0 17 14" fill="#ddd"><ellipse cx="6.500" cy="2.300" rx="6" ry="2.200" /><path d="M.5 4c2 2 10 2 12 0v2.500c-2 1.500-10 1.500-12 0zM.5 7.500c2 1.500 6 1.500 9 1v2.200c-3 .5-7 .5-9-1zM.5 11c2 1.500 6 1.500 9 1v1.500c-3 1-8 .5-9-1zM12 7h2v3h3v1.500h-3v3h-2v-3H9V10h3z" /></svg>
      <Caret className="ml-[5px] mt-[4px]" color="#ddd" />
      <svg className="ml-[20px]" width="17" height="14" viewBox="0 0 17 14" fill="#ddd"><path d="M0 9h3v4H0zM4 6h3v7H4zM8 1h3v7H9v5H8zM12 6h2v3h3v2h-3v3h-2v-3H9V9h3z" /></svg>
      <svg className="ml-[25px]" width="11" height="11" viewBox="0 0 11 11" fill="#ddd"><path d="M4.500 0h2v4.500H11v2H6.500V11h-2V6.500H0v-2h4.500z" /></svg>
      <Caret className="ml-[5px] mt-[3px]" color="#ddd" />
      <svg className="ml-[25px]" width="15" height="12" viewBox="0 0 15 12" fill="none" stroke="#ddd" strokeWidth="2"><path d="M3 3.500V7.500c0 2 1 2.500 4 2.500M6.500 1.500c4 0 5.500.5 5.500 3V8" /><path d="M0 4.500L3 .5l3 4zM9 7l3 4 3-4z" fill="#ddd" stroke="none" /></svg>
      <span className="flex-1" />
      <svg width="15" height="13" viewBox="0 0 15 13" fill="#ddd"><path d="M0 0h9v4h2v2h1v5H5V8H0zM11 1h1v2h2v1h-2v2h-1V4H9V3h2zM1 9l3 3V9z" /></svg>
      <svg className="ml-[26px]" width="15" height="13" viewBox="0 0 15 13"><path d="M1 1h13v8.500H1zM4 12h7M7 10v2" fill="none" stroke="#ddd" strokeWidth="1.500" /><path d="M5.500 3l4 2.300-4 2.300z" fill="#ddd" /></svg>
    </div>
  );
}

const UI = "font-['Noto_Sans']";

function TitleBar() {
  return (
    <>
      <div className={"flex h-[31px] shrink-0 items-center border-t border-[#1883d7] pl-[8px] text-black " + UI}>
        <MLogo size={16} />
        <span className="ml-[5px] text-[12px] tracking-[-0.390px]">Private Loans Dashboard v5 - MicroStrategy Desktop</span>
        <span className="flex-1" />
        <svg width="107" height="11" viewBox="0 0 107 11" fill="none" stroke="#000"><path d="M0 5.500h10M44.500.5h10v10h-10zM90 0l11 11M90 11L101 0" /></svg>
      </div>
      <nav className={"flex h-[20px] shrink-0 items-center border-b border-[#f0f0f0] pl-[7px] text-[12px] tracking-[-0.450px] text-black " + UI}>
        <span className="w-[31px]">File</span><span className="w-[47px]">Server</span><span className="w-[39px]">View</span><span className="w-[52px]">Format</span><span>Help</span>
      </nav>
    </>
  );
}

function TaskItem({ w, children, active, line = true }: { w: number; children: React.ReactNode; active?: boolean; line?: boolean }) {
  return (
    <div className={"flex h-full shrink-0 flex-col items-center " + (active ? "border-r-4 border-[#353535] bg-[#464646]" : "")} style={{ width: w }}>
      <div className="flex flex-1 items-center">{children}</div>
      <div className={"h-[2px] w-full " + (line ? "bg-[#76b9ed]" : "")} />
    </div>
  );
}

function Taskbar() {
  return (
    <footer className={"flex h-[40px] w-full shrink-0 bg-[linear-gradient(#262626_0_24px,#050505_25px)] text-white " + UI}>
      <div className="flex h-full w-[48px] items-center justify-center bg-[linear-gradient(90deg,#050505_0_8px,#222_8px)]">
        <svg width="16" height="16" viewBox="0 0 16 16" fill="#fff"><path d="M0 2.300l6.500-.9v6.200H0zM7.300 1.300L16 0v7.600H7.300zM0 8.400h6.500v6.200L0 13.700zM7.300 8.400H16V16l-8.700-1.200z" /></svg>
      </div>
      <div className="flex h-full w-[344px] items-center border-t border-[#b8b8b8] bg-[#f2f2f2] pl-[9px] pr-[13px]">
        <svg width="22" height="22" viewBox="0 0 22 22" fill="none"><circle cx="11" cy="11" r="9" stroke="#000" strokeWidth="2.800" /></svg>
        <span className="ml-[9px] flex-1 text-[15px] tracking-[-0.530px] text-[#333]">Type here to search</span>
        <svg width="14" height="18" viewBox="0 0 14 18" fill="none" stroke="#222" strokeWidth="1.300"><rect x="4.500" y="1" width="5" height="10" rx="2.500" /><path d="M2 8v2c0 4 10 4 10 0V8M7 13v4M4 17h6" /></svg>
      </div>
      <div className="flex h-full w-[47px] items-center justify-center">
        <svg width="20" height="14" viewBox="0 0 20 14" fill="none" stroke="#fff"><path d="M4.500.5h11v13h-11zM2.500 2.500h-2v9h2M17.500 2.500h2v9h-2" /></svg>
      </div>
      <span className="w-[8px]" />
      <TaskItem w={40}>
        <svg width="21" height="22" viewBox="0 0 24 24"><path d="M1 11C2 4 7 0 13 0c6 0 10 5 10 10v4H8c0 6 8 7 13 4v4c-6 4-18 2-18-8 0-4 2-7 5-8-4 1-6 3-7 5zm7-1h8c0-5-7-6-8 0z" fill="#0f7ddb" /></svg>
      </TaskItem>
      <span className="w-[9px]" />
      <TaskItem w={40}>
        <svg width="22" height="19" viewBox="0 0 22 19"><path d="M0 1h9l2 2h10v15H0z" fill="#f3c95b" /><path d="M0 5h22v13H0z" fill="#fde68f" /><path d="M4 18v-7h14v7h-4v-4H8v4z" fill="#35aee6" /></svg>
      </TaskItem>
      <span className="w-[9px]" />
      <TaskItem w={40} line={false}>
        <svg width="24" height="19" viewBox="0 0 24 19"><path d="M0 6l12-6 12 6v13H0z" fill="#fff" /><path d="M1 6h22l-9 5 7 4-9-4z" fill="#202020" /></svg>
      </TaskItem>
      <span className="w-[9px]" />
      <TaskItem w={40}>
        <svg width="18" height="18" viewBox="0 0 18 18"><path d="M0 0h18v11l-7 7H0z" fill="#efe497" /><path d="M11 18v-7h7z" fill="#706a3a" /></svg>
      </TaskItem>
      <span className="w-[9px]" />
      <TaskItem w={40}>
        <svg width="18" height="18" viewBox="0 0 18 18" fill="none" stroke="#fff"><circle cx="9" cy="9" r="5" strokeWidth="2.600" /><circle cx="9" cy="9" r="7.600" strokeWidth="2.200" strokeDasharray="2.600 3.370" /></svg>
      </TaskItem>
      <span className="w-[5px]" />
      <TaskItem w={48} active><span className="pl-[4px]"><MLogo size={24} /></span></TaskItem>
      <span className="flex-1" />
      <div className="flex h-full items-center">
        <svg width="16" height="16" viewBox="0 0 16 16" fill="none" stroke="#fff" strokeWidth="1.200"><circle cx="10.500" cy="3.500" r="2.800" /><circle cx="5" cy="8" r="2.500" /><path d="M1 15c0-5 7-6 8-1M8 8c3-2 6-1 7 3" /></svg>
        <svg className="ml-[21px]" width="12" height="7" viewBox="0 0 12 7" fill="none" stroke="#fff" strokeWidth="1.300"><path d="M.5 6.500L6 1l5.500 5.500" /></svg>
        <svg className="ml-[10px]" width="17" height="15" viewBox="0 0 17 15" fill="none" stroke="#fff" strokeWidth="1.200"><path d="M5 2.500h11v8H3.500V6M1 1h4v4H1zM3.500 10v3.500M7 13.500h6M10 11v2" /></svg>
        <svg className="ml-[7px]" width="17" height="14" viewBox="0 0 17 14" fill="none" stroke="#fff" strokeWidth="1.200"><path d="M1 5h2.500L7 1.500v11L3.500 9H1zM9.500 5c1 1 1 3 0 4M11.500 3c2 2 2 6 0 8M13.500 1c3 3 3 9 0 12" /></svg>
        <div className="ml-[8px] w-[54px] whitespace-nowrap text-center text-[12px] leading-[18px] tracking-[-0.500px]"><div>1:26 AM</div><div>5/30/2018</div></div>
        <div className="relative ml-[17px] flex h-full w-[41px] items-start pt-[12px]">
          <svg width="17" height="16" viewBox="0 0 17 16"><path d="M0 0h16v12h-7l-4 4v-4H0z" fill="#fff" /><path d="M3 3h10M3 6h10M3 9h7" stroke="#222" /></svg>
          <span className="absolute left-[7px] top-[19px] flex h-[17px] w-[17px] items-center justify-center rounded-full border border-[#aaa] bg-[#333] text-[11px] font-bold">2</span>
          <span className="absolute right-[5px] top-0 h-full w-px bg-[#555]" />
        </div>
      </div>
    </footer>
  );
}

export default function App() {
  return (
    <div className="relative flex h-[768px] w-[1366px] flex-col overflow-hidden bg-[#04152f] font-['Liberation_Sans'] text-[11px] leading-[14px]">
      <div className="flex min-h-0 flex-1">
        <div className="flex w-[8px] shrink-0 flex-col overflow-hidden border-r border-[#2277bb] bg-[linear-gradient(#031d3f,#020b20)] pl-[4px] text-[11px] text-[#d8e0d0]">
          <span className="mt-[158px]">D</span>
          <span className="mt-[85px]">S</span>
          <span className="mt-[85px]">j</span>
          <span className="mt-[85px] text-[#e0a84c]">v</span>
          <span className="mt-[182px]">F</span>
        </div>
        <div className="flex min-w-0 flex-1 flex-col bg-white">
          <TitleBar />
          <Toolbar />
          <div className="flex min-h-0 flex-1 overflow-hidden bg-[#c9c9c9]">
            <Datasets />
            <span className="w-[4px] shrink-0" />
            <Editor />
            <span className="w-[4px] shrink-0" />
            <main className="mt-[4px] flex w-[952px] shrink-0 flex-col rounded-t-[3px] bg-white pl-[3px] pt-[3px]">
              <div className="flex">
                <MapPanel />
                <div className="pl-[2px] pt-[2px]"><BarPanel /></div>
              </div>
              <div className="pl-[2px] pt-[3px]"><ScatterPanel /></div>
              <div className="pl-[2px] pt-[4px]"><LinePanel /></div>
            </main>
            <span className="w-[4px] shrink-0" />
            <Gallery />
          </div>
        </div>
      </div>
      <Taskbar />
      <div className="pointer-events-none absolute left-[1073px] top-[650px] whitespace-nowrap font-['Noto_Sans'] text-[#8a8a8a]/60">
        <div className="text-[18px] leading-[25px] tracking-[0.550px]">Activate Windows</div>
        <div className="text-[14px] leading-[20px] tracking-[0.120px]">Go to Settings to activate Windows.</div>
      </div>
    </div>
  );
}
